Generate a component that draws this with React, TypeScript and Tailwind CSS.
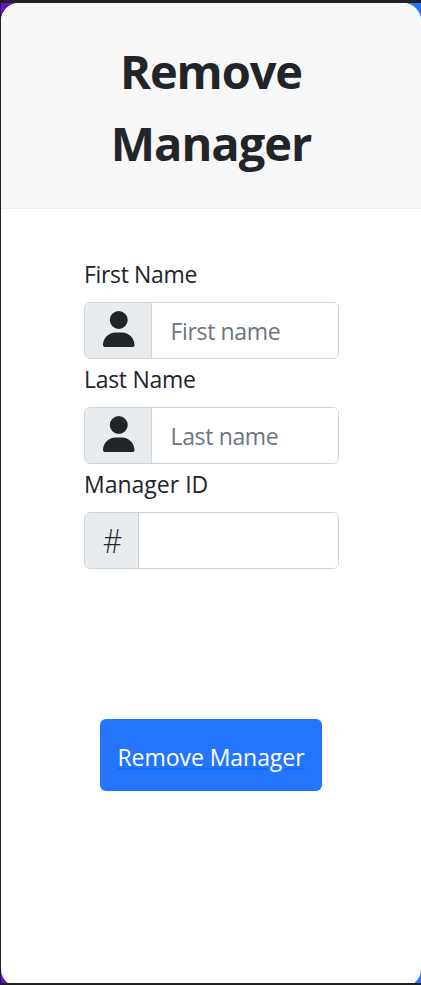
import type { ReactNode } from "react";

function PersonIcon() {
  return (
    <svg viewBox="0 0 448 512" className="mb-[3px] h-9 w-[31.5px] shrink-0" fill="#212529">
      <path d="M224 256A128 128 0 1 0 224 0a128 128 0 1 0 0 256zm-45.700 48C79.800 304 0 383.800 0 482.300C0 498.700 13.300 512 29.700 512H418.300c16.400 0 29.700-13.300 29.700-29.700C448 383.800 368.200 304 269.700 304H178.300z" />
    </svg>
  );
}

type FieldProps = {
  id: string;
  label: ReactNode;
  placeholder?: string;
  addon: ReactNode;
  addonClass: string;
};

function Field({ id, label, placeholder, addon, addonClass }: FieldProps) {
  return (
    <div>
      <label htmlFor={id} className="mb-[10px] block h-[38px] pt-[2px] text-[23px] leading-9">
        {label}
      </label>
      <div className="flex h-[57px] overflow-hidden rounded-md border border-[#ced4da]">
        <span className={`flex shrink-0 items-center justify-center border-r border-[#ced4da] bg-[#e9ecef] ${addonClass}`}>
          {addon}
        </span>
        <input
          id={id}
          placeholder={placeholder}
          className="min-w-0 flex-1 bg-white px-[18.500px] pt-[2px] text-[23px] tracking-[-0.35px] outline-none placeholder:text-[#6c757d]"
        />
      </div>
    </div>
  );
}

export default function App() {
  return (
    <div className="h-[985px] w-[421px] overflow-hidden bg-[#212122] pt-[3px] pb-[2px] pl-px font-['Open_Sans','Noto_Sans',sans-serif] text-[#212529]">
      <div className="h-[980px] overflow-hidden bg-linear-to-r from-[#6a11cb] to-[#2575fc]">
        <main className="h-[984px] overflow-hidden rounded-[18px] bg-white">
          <header className="h-[206px] border-b border-[#ededed] bg-[#f7f7f7] pt-8">
            <h1 className="text-center text-[47px] leading-[72px] font-bold">
              <span className="block tracking-[-1.1px]">Remove</span>
              <span className="block tracking-[-1px]">Manager</span>
            </h1>
          </header>
          <form className="mr-[82px] ml-[83px] pt-[45px]">
            <Field
              id="first"
              label={<span className="tracking-[-0.35px]">First Name</span>}
              placeholder="First name"
              addon={<PersonIcon />}
              addonClass="w-[67px] pl-[2px]"
            />
            <Field
              id="last"
              label={<span className="tracking-[-0.3px]">Last Name</span>}
              placeholder="Last name"
              addon={<PersonIcon />}
              addonClass="w-[67px] pl-[2px]"
            />
            <Field
              id="manager"
              label={<span>Manager ID</span>}
              addon={<span className="text-[33px] leading-none font-light scale-x-90">#</span>}
              addonClass="w-[54px] pl-[2px]"
            />
            <button
              type="button"
              className="mt-[150px] ml-4 flex h-[72px] w-[222px] items-center justify-center rounded-md bg-[#2575fc] pt-[4px] text-[23px] whitespace-nowrap text-white"
            >
              <span className="tracking-[-0.05px] underline decoration-[#0d6efd] decoration-2 underline-offset-2">
                Remove Manager
              </span>
            </button>
          </form>
        </main>
      </div>
    </div>
  );
}
